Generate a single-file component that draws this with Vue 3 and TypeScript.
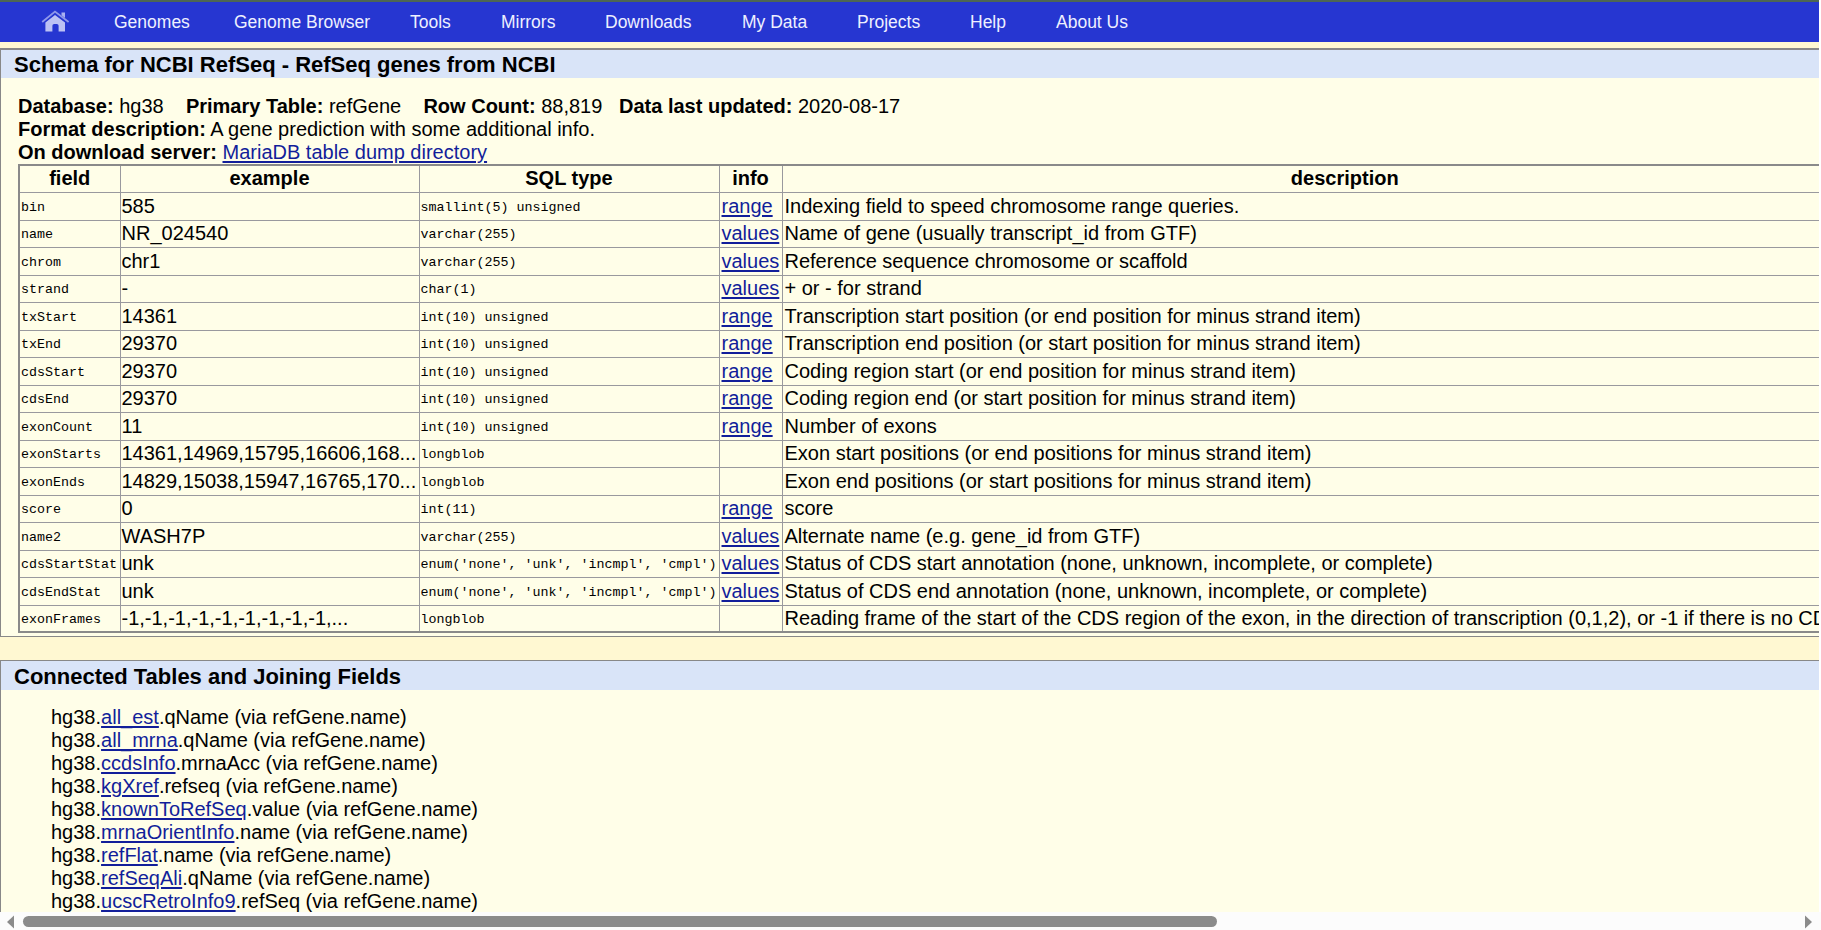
<script setup lang="ts">
interface Field {
  name: string
  example: string
  type: string
  info: string
  description: string
}

interface Join {
  table: string
  field: string
}

const menu: string[] = ['Genomes', 'Genome Browser', 'Tools', 'Mirrors', 'Downloads', 'My Data', 'Projects', 'Help', 'About Us']

const f = (name: string, example: string, type: string, info: string, description: string): Field =>
  ({ name, example, type, info, description })

const fields: Field[] = [
  f('bin', '585', 'smallint(5) unsigned', 'range', 'Indexing field to speed chromosome range queries.'),
  f('name', 'NR_024540', 'varchar(255)', 'values', 'Name of gene (usually transcript_id from GTF)'),
  f('chrom', 'chr1', 'varchar(255)', 'values', 'Reference sequence chromosome or scaffold'),
  f('strand', '-', 'char(1)', 'values', '+ or - for strand'),
  f('txStart', '14361', 'int(10) unsigned', 'range', 'Transcription start position (or end position for minus strand item)'),
  f('txEnd', '29370', 'int(10) unsigned', 'range', 'Transcription end position (or start position for minus strand item)'),
  f('cdsStart', '29370', 'int(10) unsigned', 'range', 'Coding region start (or end position for minus strand item)'),
  f('cdsEnd', '29370', 'int(10) unsigned', 'range', 'Coding region end (or start position for minus strand item)'),
  f('exonCount', '11', 'int(10) unsigned', 'range', 'Number of exons'),
  f('exonStarts', '14361,14969,15795,16606,168...', 'longblob', '', 'Exon start positions (or end positions for minus strand item)'),
  f('exonEnds', '14829,15038,15947,16765,170...', 'longblob', '', 'Exon end positions (or start positions for minus strand item)'),
  f('score', '0', 'int(11)', 'range', 'score'),
  f('name2', 'WASH7P', 'varchar(255)', 'values', 'Alternate name (e.g. gene_id from GTF)'),
  f('cdsStartStat', 'unk', "enum('none', 'unk', 'incmpl', 'cmpl')", 'values', 'Status of CDS start annotation (none, unknown, incomplete, or complete)'),
  f('cdsEndStat', 'unk', "enum('none', 'unk', 'incmpl', 'cmpl')", 'values', 'Status of CDS end annotation (none, unknown, incomplete, or complete)'),
  f('exonFrames', '-1,-1,-1,-1,-1,-1,-1,-1,-1,...', 'longblob', '', 'Reading frame of the start of the CDS region of the exon, in the direction of transcription (0,1,2), or -1 if there is no CD'),
]

const joins: Join[] = [
  { table: 'all_est', field: 'qName' },
  { table: 'all_mrna', field: 'qName' },
  { table: 'ccdsInfo', field: 'mrnaAcc' },
  { table: 'kgXref', field: 'refseq' },
  { table: 'knownToRefSeq', field: 'value' },
  { table: 'mrnaOrientInfo', field: 'name' },
  { table: 'refFlat', field: 'name' },
  { table: 'refSeqAli', field: 'qName' },
  { table: 'ucscRetroInfo9', field: 'refSeq' },
]
</script>

<template>
  <div class="window">
    <div class="page">
      <nav class="menu">
        <a class="home" href="#">
          <svg width="29" height="22" viewBox="0 0 29 22">
            <path d="M1.2 12 L14 1.6 L27.6 12" fill="none" stroke="#8f98ea" stroke-width="1.8" />
            <path d="M20.5 2.5h3.5v5.6l-3.5-2.8z" fill="#aab1f0" />
            <path d="M14 5 L24 12.6 V21.5 H17.6 V15.8 Q17.6 14 15.8 14 H13.2 Q11.4 14 11.4 15.8 V21.5 H4.4 V12.6 Z" fill="#bcc2f4" />
          </svg>
        </a>
        <a v-for="item in menu" :key="item" class="item" href="#">{{ item }}</a>
      </nav>

      <section class="panel schema">
        <h2>Schema for NCBI RefSeq - RefSeq genes from NCBI</h2>
        <div class="body">
          <p><b>Database:</b> hg38&nbsp;&nbsp;&nbsp; <b>Primary Table:</b> refGene&nbsp;&nbsp;&nbsp; <b>Row Count:</b> 88,819&nbsp;&nbsp; <b>Data last updated:</b> 2020-08-17</p>
          <p><b>Format description:</b> A gene prediction with some additional info.</p>
          <p><b>On download server:</b> <a href="#">MariaDB table dump directory</a></p>
          <table>
            <colgroup>
              <col class="c-field"><col class="c-example"><col class="c-type"><col class="c-info"><col class="c-desc">
            </colgroup>
            <thead>
              <tr><th>field</th><th>example</th><th>SQL type</th><th>info</th><th>description</th></tr>
            </thead>
            <tbody>
              <tr v-for="row in fields" :key="row.name">
                <td><code>{{ row.name }}</code></td>
                <td>{{ row.example }}</td>
                <td><code>{{ row.type }}</code></td>
                <td class="inset"><a v-if="row.info" href="#">{{ row.info }}</a></td>
                <td class="inset">{{ row.description }}</td>
              </tr>
            </tbody>
          </table>
        </div>
      </section>

      <section class="panel joined">
        <h2>Connected Tables and Joining Fields</h2>
        <ul>
          <li v-for="j in joins" :key="j.table">hg38.<a href="#">{{ j.table }}</a>.{{ j.field }} (via refGene.name)</li>
        </ul>
      </section>
    </div>

    <div class="scrollbar">
      <svg class="arrow" width="8" height="14" viewBox="0 0 8 14"><path d="M7 0.5v13L0 7z" fill="#8b8b8b" /></svg>
      <div class="track"><div class="thumb"></div></div>
      <svg class="arrow" width="8" height="14" viewBox="0 0 8 14"><path d="M0 0.5v13L7 7z" fill="#8b8b8b" /></svg>
    </div>
  </div>
</template>

<style>
html,
body {
  margin: 0;
  overflow: hidden;
  background: #fff;
}
</style>

<style scoped>
.window {
  width: 1821px;
  height: 930px;
  overflow: hidden;
  display: flex;
  flex-direction: column;
  font: 20px/23px "Liberation Sans", Arial, sans-serif;
  color: #000;
}

.page {
  width: 1819px;
  height: 912px;
  flex: none;
  overflow: hidden;
  background: #fff8d2;
}

a {
  color: #121e9a;
  text-decoration: underline;
  text-decoration-thickness: 2px;
  text-underline-offset: 2px;
}

.menu {
  box-sizing: border-box;
  height: 42px;
  border-top: 2px solid #4d6653;
  background: #2636d1;
  display: grid;
  grid-template-columns: 114px 120px 176px 91px 104px 137px 115px 113px 86px auto;
  align-items: start;
}

.menu a {
  color: #eef0ff;
  font-size: 17.5px;
  line-height: 20px;
  text-decoration: none;
  white-space: nowrap;
  padding-top: 10px;
}

.menu a.home {
  padding: 8px 0 0 41px;
  line-height: 0;
}

.panel {
  box-sizing: border-box;
  border: 1px solid #888;
  border-right: 0;
  background: #fffee8;
}

.schema {
  margin-top: 6px;
  height: 589px;
  border-top-width: 2px;
}

.joined {
  margin-top: 23px;
  height: 300px;
}

h2 {
  box-sizing: border-box;
  margin: 0;
  padding: 1px 0 0 13px;
  height: 28px;
  font-size: 22px;
  line-height: 28px;
  background: #d9e4f8;
}

.joined h2 {
  height: 29px;
  line-height: 29px;
}

.body {
  padding: 17px 0 0 17px;
}

p {
  margin: 0;
  white-space: nowrap;
}

table {
  table-layout: fixed;
  width: 1889px;
  border-collapse: collapse;
  border: 2px solid #8a8a8a;
}

.c-field { width: 101px; }
.c-example { width: 299px; }
.c-type { width: 300px; }
.c-info { width: 63px; }
.c-desc { width: 1126px; }

th,
td {
  box-sizing: border-box;
  padding: 0 0 0 1px;
  border: 1px solid #99999e;
  white-space: nowrap;
  vertical-align: top;
  line-height: 25px;
}

th {
  padding: 0 1px;
}

td.inset {
  padding-left: 2px;
}

thead tr { height: 27px; }
tbody tr:nth-child(odd) { height: 28px; }
tbody tr:nth-child(even) { height: 27px; }
tbody tr:nth-child(odd) td { padding-top: 1px; }

code {
  display: block;
  padding-top: 3px;
  font: 13.33px/22px "Liberation Mono", "Courier New", monospace;
}

ul {
  list-style: none;
  margin: 0;
  padding: 16px 0 0 50px;
}

.scrollbar {
  height: 18px;
  background: #fcfcfc;
  display: flex;
  align-items: center;
  padding: 1px 8px 0 7px;
}

.arrow {
  flex: none;
}

.track {
  flex: 1;
  padding-left: 8px;
}

.thumb {
  width: 1194px;
  height: 11px;
  border-radius: 6px;
  background: #8b8b8b;
}
</style>
